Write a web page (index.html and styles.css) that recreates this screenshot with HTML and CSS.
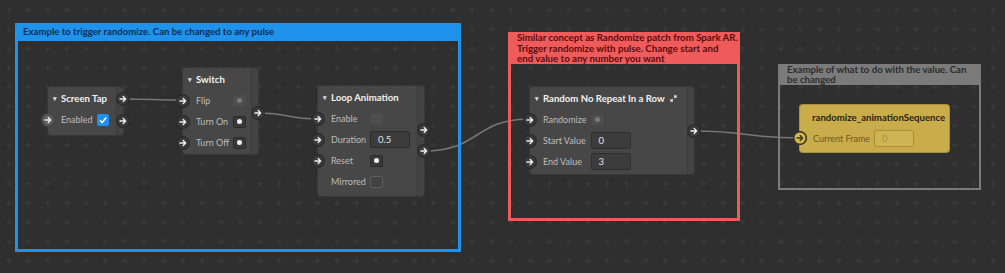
FILE: index.html
```html
<!DOCTYPE html>
<html lang="en">
<head>
    <meta charset="UTF-8">
    <meta name="viewport" content="width=device-width, initial-scale=1.0">
    <title>Patch Editor - Randomize</title>
    <link rel="stylesheet" href="styles.css">
</head>
<body>
    <div class="canvas">
        <!-- grid and wires sit under everything -->
        <svg class="wires" width="1005" height="273">
            <defs>
                <pattern id="grid" x="-0.65" y="0.35" width="19.3" height="19.3" patternUnits="userSpaceOnUse">
                    <path d="M7.15 9.65h5M9.65 7.15v5" stroke="#3e3e3e" stroke-width="1"/>
                </pattern>
                <symbol id="port" viewBox="0 0 14 14">
                    <circle cx="7" cy="7" r="6.3"/>
                    <path d="M4 7h5.3M7.2 4.6 9.6 7 7.2 9.4" stroke="currentColor" stroke-width="1.4" fill="none" stroke-linecap="round" stroke-linejoin="round"/>
                </symbol>
            </defs>
            <rect width="1005" height="273" fill="url(#grid)"/>
            <path class="wire" d="M123 99 C150 99 156 100 183 100"/>
            <path class="wire" d="M258 113 C290 113 286 119 318 119"/>
            <path class="wire" d="M424 151 C480 151 474 119 530 119"/>
            <path class="wire" d="M694 131 C748 131 746 138 800 138"/>
        </svg>

        <!-- comment groups -->
        <div class="group group-trigger">
            <div class="group-title">Example to trigger randomize. Can be changed to any pulse</div>
        </div>
        <div class="group group-random">
            <div class="group-title">Similar concept as Randomize patch from Spark AR.<br>Trigger randomize with pulse. Change start and<br>end value to any number you want</div>
        </div>
        <div class="group group-value">
            <div class="group-title">Example of what to do with the value. Can<br>be changed</div>
        </div>

        <!-- Screen Tap -->
        <div class="node node-tap">
            <div class="node-title"><span class="caret">&#9662;</span>Screen Tap</div>
            <div class="node-rows">
                <span class="label"><svg class="port port-in port-light"><use href="#port"/></svg>Enabled</span>
                <span class="check"><svg viewBox="0 0 12 12"><path d="M3 6.3l2.2 2.3L9.2 3.4"/></svg></span>
            </div>
            <svg class="port port-out out-1"><use href="#port"/></svg>
            <svg class="port port-out out-2"><use href="#port"/></svg>
        </div>

        <!-- Switch -->
        <div class="node node-switch">
            <div class="node-title"><span class="caret">&#9662;</span>Switch</div>
            <div class="node-rows">
                <span class="label"><svg class="port port-in"><use href="#port"/></svg>Flip</span>
                <span class="box box-dim"><span class="dot"></span></span>
                <span class="label"><svg class="port port-in"><use href="#port"/></svg>Turn On</span>
                <span class="box"><span class="dot"></span></span>
                <span class="label"><svg class="port port-in"><use href="#port"/></svg>Turn Off</span>
                <span class="box"><span class="dot"></span></span>
            </div>
            <svg class="port port-out out-mid"><use href="#port"/></svg>
        </div>

        <!-- Loop Animation -->
        <div class="node node-loop">
            <div class="node-title"><span class="caret">&#9662;</span>Loop Animation</div>
            <div class="node-rows">
                <span class="label"><svg class="port port-in"><use href="#port"/></svg>Enable</span>
                <span class="box box-dim"></span>
                <span class="label"><svg class="port port-in"><use href="#port"/></svg>Duration</span>
                <span class="field">0.5</span>
                <span class="label"><svg class="port port-in"><use href="#port"/></svg>Reset</span>
                <span class="box"><span class="dot"></span></span>
                <span class="label">Mirrored</span>
                <span class="box box-empty"></span>
            </div>
            <svg class="port port-out out-mid"><use href="#port"/></svg>
            <svg class="port port-out out-low"><use href="#port"/></svg>
        </div>

        <!-- Random No Repeat -->
        <div class="node node-random">
            <div class="node-title">
                <span class="caret">&#9662;</span>Random No Repeat In a Row
                <svg class="expand" viewBox="0 0 8 8"><path d="M4.6 1H7v2.4M7 1 4.6 3.4M3.4 7H1V4.6M1 7l2.4-2.4"/></svg>
            </div>
            <div class="node-rows">
                <span class="label"><svg class="port port-in"><use href="#port"/></svg>Randomize</span>
                <span class="box box-dim"><span class="dot"></span></span>
                <span class="label"><svg class="port port-in"><use href="#port"/></svg>Start Value</span>
                <span class="field">0</span>
                <span class="label"><svg class="port port-in"><use href="#port"/></svg>End Value</span>
                <span class="field">3</span>
            </div>
            <svg class="port port-out out-mid"><use href="#port"/></svg>
        </div>

        <!-- Animation sequence -->
        <div class="node node-asset">
            <div class="node-title">randomize_animationSequence</div>
            <div class="node-rows">
                <span class="label"><svg class="port port-in port-yellow"><use href="#port"/></svg>Current Frame</span>
                <span class="field field-yellow">0</span>
            </div>
        </div>
    </div>
</body>
</html>
```

FILE: styles.css
```css
* {
    box-sizing: border-box;
    margin: 0;
    padding: 0;
}

body {
    font-family: Lato, "Open Sans", sans-serif;
    background-color: #2f2f2f;
}

/* Canvas */
.canvas {
    position: relative;
    width: 1005px;
    height: 273px;
    overflow: hidden;
    background-color: #2f2f2f;
}

.wires {
    position: absolute;
    left: 0;
    top: 0;
}

.wire {
    fill: none;
    stroke: #777777;
    stroke-width: 1.5;
}

/* Comment groups */
.group {
    position: absolute;
    border: 3px solid;
    border-top: 0;
}

.group-title {
    font-size: 9.6px;
    font-weight: bold;
    line-height: 10.5px;
    white-space: nowrap;
}

.group-trigger {
    left: 15px;
    top: 23px;
    width: 446px;
    height: 229px;
    border-color: #1f93ec;
}

.group-trigger .group-title {
    background-color: #1f93ec;
    color: #0f2c52;
    padding: 4px 5px 3.5px;
}

.group-random {
    left: 508px;
    top: 32px;
    width: 232px;
    height: 189px;
    border-color: #ef5a5a;
}

.group-random .group-title {
    background-color: #ef5a5a;
    color: #5a0d0d;
    font-size: 9.7px;
    padding: 0 6px;
}

.group-value {
    left: 778px;
    top: 64px;
    width: 203px;
    height: 126px;
    border-width: 2px;
    border-color: #7b7b7b;
}

.group-value .group-title {
    background-color: #7b7b7b;
    color: #2b2b2b;
    line-height: 10px;
    padding: 1px 7px 0;
}

/* Nodes */
.node {
    position: absolute;
    border-radius: 3px;
    background: linear-gradient(to left, #434343 6px, #3b3b3b 6px, #3b3b3b 7px, #474747 7px);
    box-shadow: 0 0 0 1px #383838;
    padding-bottom: 4px;
}

.node-title {
    display: flex;
    align-items: center;
    height: 22px;
    padding-left: 5px;
    color: #f2f2f2;
    font-size: 9.6px;
    font-weight: bold;
    white-space: nowrap;
}

.caret {
    width: 8px;
    font-size: 7px;
    color: #d8d8d8;
}

.node-rows {
    display: grid;
    grid-template-columns: max-content max-content;
    grid-auto-rows: 21px;
    column-gap: 4px;
    align-items: center;
    padding-left: 13px;
}

.label {
    position: relative;
    color: #bdbdbd;
    font-size: 9px;
    white-space: nowrap;
}

/* Ports */
.port {
    position: absolute;
    width: 14px;
    height: 14px;
    fill: #3a3a3a;
    stroke: #2a2a2a;
    stroke-width: 1.2;
    color: #f0f0f0;
}

.port-in {
    left: -20px;
    top: 50%;
    margin-top: -7px;
}

.port-light {
    fill: #5b5b5b;
    stroke: #444444;
}

.port-yellow {
    fill: #d5b94e;
    stroke: #3d3522;
    stroke-width: 1.6;
    color: #3d3522;
}

.port-out {
    right: -7px;
}

.node-tap .out-1 { top: 5px; }
.node-tap .out-2 { top: 27px; }
.node-switch .out-mid { top: 38px; }
.node-loop .out-mid { top: 37px; }
.node-loop .out-low { top: 58px; }
.node-random .out-mid { top: 37px; }

/* Value widgets */
.box {
    display: flex;
    align-items: center;
    justify-content: center;
    width: 13px;
    height: 12px;
    background-color: #393939;
    border: 1px solid #2a2a2a;
    border-radius: 2px;
}

.box-dim {
    background-color: #4e4e4e;
    border-color: #4a4a4a;
}

.box-empty {
    background-color: #424242;
    border-color: #5e5e5e;
}

.dot {
    width: 5px;
    height: 5px;
    border-radius: 50%;
    background-color: #f0f0f0;
}

.box-dim .dot {
    background-color: #7a7a7a;
}

.check {
    width: 12px;
    height: 12px;
    border-radius: 2px;
    background-color: #1e90ef;
}

.check svg {
    display: block;
    width: 12px;
    height: 12px;
    fill: none;
    stroke: #ffffff;
    stroke-width: 1.5;
}

.field {
    width: 40px;
    height: 17px;
    line-height: 15px;
    padding-left: 7px;
    background-color: #3c3c3c;
    border: 1px solid #2d2d2d;
    border-radius: 2px;
    color: #e0e0e0;
    font-size: 9.5px;
}

.expand {
    width: 7px;
    height: 7px;
    margin-left: auto;
    margin-right: 17px;
    fill: none;
    stroke: #e0e0e0;
    stroke-width: 1.2;
}

/* Node placement on the canvas */
.node-tap {
    left: 48px;
    top: 87px;
    width: 75px;
    padding-bottom: 5px;
}

.node-switch {
    left: 183px;
    top: 68px;
    width: 75px;
    padding-bottom: 1px;
}

.node-loop {
    left: 318px;
    top: 86px;
    width: 106px;
}

.node-random {
    left: 530px;
    top: 87px;
    width: 164px;
    padding-bottom: 2px;
}

.node-asset {
    left: 800px;
    top: 105px;
    width: 149px;
    background: #c9ad4b;
    box-shadow: 0 0 0 1px #a8903c;
    padding-bottom: 3px;
}

.node-asset .node-title {
    height: auto;
    padding: 4px 0 0 12px;
    line-height: 18px;
    color: #2a2416;
}

.node-asset .node-rows {
    grid-auto-rows: 22px;
}

.node-asset .label {
    color: #6a5824;
}

.field-yellow {
    background-color: #cfb454;
    border-color: #a88f3c;
    color: #a98f4c;
}
```
